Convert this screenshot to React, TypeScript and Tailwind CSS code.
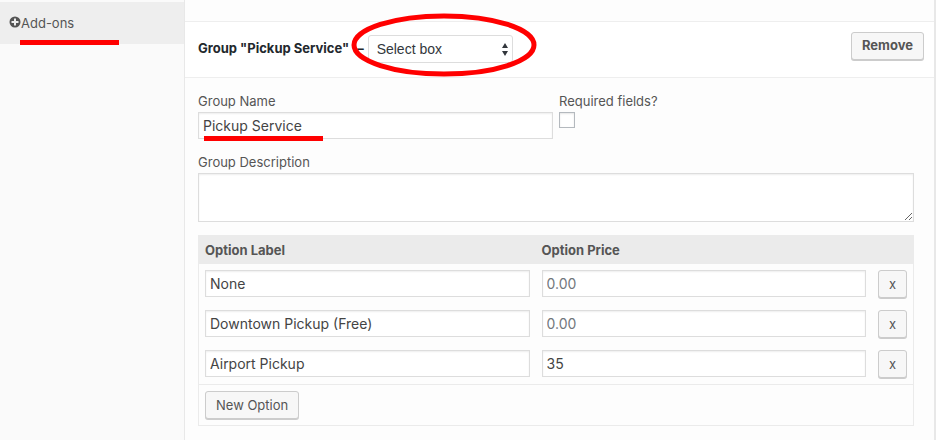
import { useState } from 'react';

interface Option {
  label: string;
  price: string;
}

const initialOptions: Option[] = [
  { label: 'None', price: '' },
  { label: 'Downtown Pickup (Free)', price: '' },
  { label: 'Airport Pickup', price: '35' },
];

const inputClass =
  'block w-full h-[27px] border border-[#ddd] bg-white px-1 text-sm text-[#444] placeholder-[#72777c] shadow-[inset_0_1px_2px_rgba(0,0,0,0.07)] outline-none';

const buttonClass =
  'h-7 rounded-[3px] border border-[#ccc] bg-[#f7f7f7] pt-px text-[13px] text-[#555] shadow-[0_1px_0_#ccc] cursor-pointer';

function PlusCircleIcon() {
  return (
    <svg viewBox="0 0 12 12" className="w-3 h-3" aria-hidden="true">
      <circle cx="6" cy="6" r="5.5" fill="#555" />
      <path d="M6 2.5v7M2.5 6h7" stroke="#eee" strokeWidth="2" />
    </svg>
  );
}

function Sidebar() {
  return (
    <nav className="w-[184px] shrink-0 bg-[#fafafa] pt-0.5">
      <a href="#addons" className="relative flex h-[42px] items-center bg-[#eee] pl-[9px] pt-0.5 text-[13px] text-[#555]">
        <span className="pb-1">
          <PlusCircleIcon />
        </span>
        Add-ons
        <span className="absolute left-5 top-[38px] h-[5px] w-[99px] bg-[#f00]" />
      </a>
    </nav>
  );
}

function TypeSelect() {
  return (
    <div className="relative ml-1">
      <select
        aria-label="Group type"
        defaultValue="select"
        className="block h-7 w-[145px] appearance-none rounded-[3px] border border-[#ddd] bg-white pl-2 pr-5 font-['Liberation_Sans',Arial,sans-serif] text-sm text-[#32373c] outline-none"
      >
        <option value="select">Select box</option>
        <option value="checkbox">Checkboxes</option>
        <option value="radio">Radio buttons</option>
      </select>
      <svg viewBox="0 0 8 13" className="pointer-events-none absolute right-1 top-2 h-[13px] w-2" aria-hidden="true">
        <path d="M4 0L7 5H1zM4 13L1 8H7z" fill="#32373c" />
      </svg>
      <svg
        viewBox="0 0 188 66"
        className="pointer-events-none absolute -left-[18px] -top-[23px] h-[66px] w-[188px] max-w-none"
        aria-hidden="true"
      >
        <ellipse cx="94" cy="33" rx="90" ry="29" fill="none" stroke="#f00" strokeWidth="5" />
      </svg>
    </div>
  );
}

function OptionsTable() {
  const [options, setOptions] = useState(initialOptions);

  const update = (idx: number, patch: Partial<Option>) =>
    setOptions(options.map((o, i) => (i === idx ? { ...o, ...patch } : o)));

  return (
    <table className="mt-[13px] w-full table-fixed border-separate border-spacing-0 border border-[#ebebeb]">
      <thead>
        <tr className="h-7 bg-[#ebebeb] text-left text-[13px] text-[#555]">
          <th className="px-1.5 pt-0.5 font-bold">Option Label</th>
          <th className="px-1.5 pt-0.5 font-bold">Option Price</th>
          <th className="w-[41px]" />
        </tr>
      </thead>
      <tbody>
        {options.map((option, idx) => (
          <tr key={idx} className="h-10 align-top">
            <td className="px-1.5 pt-1.5">
              <input
                type="text"
                aria-label="Option Label"
                value={option.label}
                onChange={(e) => update(idx, { label: e.target.value })}
                className={inputClass}
              />
            </td>
            <td className="px-1.5 pt-1.5">
              <input
                type="text"
                aria-label="Option Price"
                placeholder="0.00"
                value={option.price}
                onChange={(e) => update(idx, { price: e.target.value })}
                className={inputClass}
              />
            </td>
            <td className="px-1.5 pt-1.5">
              <button
                type="button"
                onClick={() => setOptions(options.filter((_, i) => i !== idx))}
                className={`${buttonClass} block w-full`}
              >
                x
              </button>
            </td>
          </tr>
        ))}
      </tbody>
      <tfoot>
        <tr>
          <td colSpan={3} className="border-t border-[#ebebeb] p-1.5">
            <button
              type="button"
              onClick={() => setOptions([...options, { label: '', price: '' }])}
              className={`${buttonClass} block px-2.5`}
            >
              New Option
            </button>
          </td>
        </tr>
      </tfoot>
    </table>
  );
}

export default function App() {
  return (
    <div className="flex min-h-screen bg-[#fdfdfd] font-['Inter','Liberation_Sans',sans-serif] text-[13px] text-[#555]">
      <Sidebar />
      <main className="min-w-0 flex-1 border-l border-r-2 border-[#e8e8e8] pt-[21px]">
        <header className="flex h-[57px] items-center justify-between border-y border-[#eee] bg-white pl-[13px] pr-2.5">
          <div className="flex items-center pb-0.5 text-[#23282d]">
            <h3 className="flex gap-2 text-[13px] font-bold">
              Group "Pickup Service" <span>–</span>
            </h3>
            <TypeSelect />
          </div>
          <button type="button" className={`${buttonClass} mb-2 px-2.5 font-bold`}>
            Remove
          </button>
        </header>

        <div className="px-[13px] pt-[13px]">
          <div className="pr-[7px]">
            <div className="flex gap-1.5">
              <div className="relative w-[calc(50%-3px)]">
                <label htmlFor="group-name" className="block h-[21px] leading-5">
                  Group Name
                </label>
                <input id="group-name" type="text" defaultValue="Pickup Service" className={inputClass} />
                <span className="absolute left-1.5 top-[45px] h-[5px] w-[119px] bg-[#f00]" />
              </div>
              <div>
                <label htmlFor="required" className="block h-[21px] leading-5">
                  Required fields?
                </label>
                <input
                  id="required"
                  type="checkbox"
                  className="block h-4 w-4 appearance-none border border-[#b4b9be] bg-white shadow-[inset_0_1px_2px_rgba(0,0,0,0.1)]"
                />
              </div>
            </div>

            <label htmlFor="group-description" className="mt-[13px] block h-[21px] leading-5">
              Group Description
            </label>
            <textarea
              id="group-description"
              className="block h-[49px] w-full resize-y border border-[#ddd] bg-white px-1 text-sm shadow-[inset_0_1px_2px_rgba(0,0,0,0.07)] outline-none"
            />

            <OptionsTable />
          </div>
        </div>
      </main>
    </div>
  );
}
